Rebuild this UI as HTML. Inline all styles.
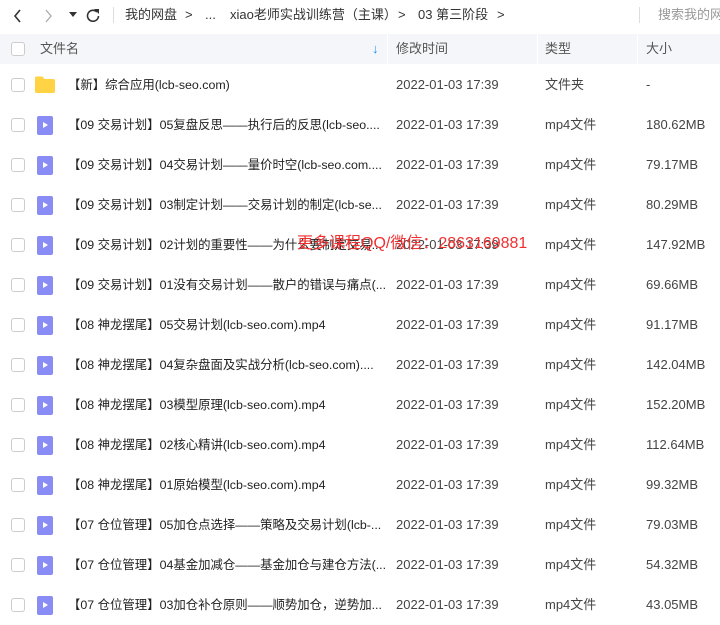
<!DOCTYPE html>
<html><head><meta charset="utf-8"><style>
*{margin:0;padding:0;box-sizing:border-box}
body{width:720px;height:619px;overflow:hidden;background:#fff;font-family:"Liberation Sans","Noto Sans CJK SC",sans-serif;font-size:13px;line-height:16px;color:#333;position:relative}
.top{position:absolute;left:0;top:0;width:720px;height:34px;color:#333}
.top span{position:absolute;top:7px;font-size:13px;white-space:nowrap}
.hdr{position:absolute;left:0;top:34px;width:720px;height:30px;background:#f5f6f9;color:#555}
.hdr span{position:absolute;top:7px}
.cb{position:absolute;left:11px;width:14px;height:14px;border:1px solid #ccc;border-radius:3px;background:#fff}
.sep{position:absolute;top:0;width:1px;height:30px;background:#fff}
.row{position:absolute;left:0;width:720px;height:40px}
.row span{position:absolute;top:12px;white-space:nowrap;line-height:16px}
.n{left:68px;color:#222;font-size:12.4px}
.d{left:396px;color:#444}
.t{left:545px;color:#444}
.s{left:646px;color:#444}
.vid{position:absolute;left:37px;top:11px;width:16px;height:19px;background:#8a8cf6;border-radius:2px}
.vid:after{content:"";position:absolute;left:6px;top:6px;border-left:5px solid #fff;border-top:3.5px solid transparent;border-bottom:3.5px solid transparent}
.row .cb{top:13px}
</style></head><body>
<div class="top">
<svg style="position:absolute;left:13px;top:9px" width="10" height="14"><path d="M7 1L2 7l5 6" stroke="#333" stroke-width="1.6" fill="none"/></svg>
<svg style="position:absolute;left:44px;top:9px" width="10" height="14"><path d="M2 1l5 6-5 6" stroke="#aaa" stroke-width="1.3" fill="none"/></svg>
<svg style="position:absolute;left:69px;top:12px" width="8" height="6"><path d="M0 0h8L4 5z" fill="#333"/></svg>
<svg style="position:absolute;left:86px;top:8px" width="14" height="14"><path d="M11 4A5.5 5.5 0 1 0 12.5 8" stroke="#333" stroke-width="1.6" fill="none"/><path d="M8 1h5v5z" fill="#333"/></svg>
<div style="position:absolute;left:113px;top:7px;width:1px;height:16px;background:#ddd"></div>
<span style="left:125px">我的网盘</span>
<span style="left:185px">&gt;</span>
<span style="left:205px">...</span>
<span style="left:230px">xiao老师实战训练营（主课）</span>
<span style="left:398px">&gt;</span>
<span style="left:418px">03 第三阶段</span>
<span style="left:497px">&gt;</span>
<div style="position:absolute;left:639px;top:7px;width:1px;height:16px;background:#ddd"></div>
<span style="left:658px;color:#999">搜索我的网盘</span>
</div>
<div class="hdr">
<div class="cb" style="top:8px"></div>
<span style="left:40px">文件名</span>
<span style="left:372px;color:#1e90ff;font-weight:bold">↓</span>
<div class="sep" style="left:387px"></div>
<span style="left:396px">修改时间</span>
<div class="sep" style="left:537px"></div>
<span style="left:545px">类型</span>
<div class="sep" style="left:637px"></div>
<span style="left:646px">大小</span>
</div>

<div class="row" style="top:65px"><div class="cb"></div>
<svg style="position:absolute;left:35px;top:11px" width="20" height="17"><path d="M0 2a1.5 1.5 0 0 1 1.5-1.5h6l2 2.5h9a1.5 1.5 0 0 1 1.5 1.5v11a1.5 1.5 0 0 1-1.5 1.5h-17A1.5 1.5 0 0 1 0 15z" fill="#ffd344"/></svg>
<span class="n">【新】综合应用(lcb-seo.com)</span><span class="d">2022-01-03 17:39</span><span class="t">文件夹</span><span class="s">-</span></div>

<div class="row" style="top:105px"><div class="cb"></div><div class="vid"></div><span class="n">【09 交易计划】05复盘反思——执行后的反思(lcb-seo....</span><span class="d">2022-01-03 17:39</span><span class="t">mp4文件</span><span class="s">180.62MB</span></div>
<div class="row" style="top:145px"><div class="cb"></div><div class="vid"></div><span class="n">【09 交易计划】04交易计划——量价时空(lcb-seo.com....</span><span class="d">2022-01-03 17:39</span><span class="t">mp4文件</span><span class="s">79.17MB</span></div>
<div class="row" style="top:185px"><div class="cb"></div><div class="vid"></div><span class="n">【09 交易计划】03制定计划——交易计划的制定(lcb-se...</span><span class="d">2022-01-03 17:39</span><span class="t">mp4文件</span><span class="s">80.29MB</span></div>
<div class="row" style="top:225px"><div class="cb"></div><div class="vid"></div><span class="n">【09 交易计划】02计划的重要性——为什么要制定交易...</span><span class="d">2022-01-03 17:39</span><span class="t">mp4文件</span><span class="s">147.92MB</span>
<span style="left:297px;top:10px;color:#f03030;font-size:16px;line-height:18px">更多课程QQ/微信：2863169881</span></div>
<div class="row" style="top:265px"><div class="cb"></div><div class="vid"></div><span class="n">【09 交易计划】01没有交易计划——散户的错误与痛点(...</span><span class="d">2022-01-03 17:39</span><span class="t">mp4文件</span><span class="s">69.66MB</span></div>
<div class="row" style="top:305px"><div class="cb"></div><div class="vid"></div><span class="n">【08 神龙摆尾】05交易计划(lcb-seo.com).mp4</span><span class="d">2022-01-03 17:39</span><span class="t">mp4文件</span><span class="s">91.17MB</span></div>
<div class="row" style="top:345px"><div class="cb"></div><div class="vid"></div><span class="n">【08 神龙摆尾】04复杂盘面及实战分析(lcb-seo.com)....</span><span class="d">2022-01-03 17:39</span><span class="t">mp4文件</span><span class="s">142.04MB</span></div>
<div class="row" style="top:385px"><div class="cb"></div><div class="vid"></div><span class="n">【08 神龙摆尾】03模型原理(lcb-seo.com).mp4</span><span class="d">2022-01-03 17:39</span><span class="t">mp4文件</span><span class="s">152.20MB</span></div>
<div class="row" style="top:425px"><div class="cb"></div><div class="vid"></div><span class="n">【08 神龙摆尾】02核心精讲(lcb-seo.com).mp4</span><span class="d">2022-01-03 17:39</span><span class="t">mp4文件</span><span class="s">112.64MB</span></div>
<div class="row" style="top:465px"><div class="cb"></div><div class="vid"></div><span class="n">【08 神龙摆尾】01原始模型(lcb-seo.com).mp4</span><span class="d">2022-01-03 17:39</span><span class="t">mp4文件</span><span class="s">99.32MB</span></div>
<div class="row" style="top:505px"><div class="cb"></div><div class="vid"></div><span class="n">【07 仓位管理】05加仓点选择——策略及交易计划(lcb-...</span><span class="d">2022-01-03 17:39</span><span class="t">mp4文件</span><span class="s">79.03MB</span></div>
<div class="row" style="top:545px"><div class="cb"></div><div class="vid"></div><span class="n">【07 仓位管理】04基金加减仓——基金加仓与建仓方法(...</span><span class="d">2022-01-03 17:39</span><span class="t">mp4文件</span><span class="s">54.32MB</span></div>
<div class="row" style="top:585px"><div class="cb"></div><div class="vid"></div><span class="n">【07 仓位管理】03加仓补仓原则——顺势加仓，逆势加...</span><span class="d">2022-01-03 17:39</span><span class="t">mp4文件</span><span class="s">43.05MB</span></div>
</body></html>
